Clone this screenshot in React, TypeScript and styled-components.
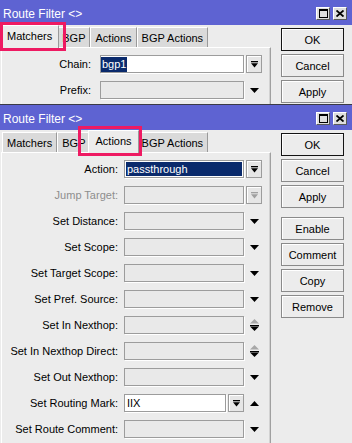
import React from "react";
import styled, { createGlobalStyle, css } from "styled-components";

const Global = createGlobalStyle`
  html, body { margin: 0; padding: 0; background: #ececec; overflow: hidden; }
  body { font-family: "Liberation Sans", Arial, sans-serif; font-size: 11px; color: #000; }
`;

const Page = styled.div`
  width: 352px;
  height: 443px;
  display: flex;
  flex-direction: column;
  overflow: hidden;
`;

const Window = styled.div<{ $h?: number; $sub?: boolean }>`
  position: relative;
  display: flex;
  flex-direction: column;
  background: #ececec;
  overflow: hidden;
  ${(p) => (p.$h ? `height: ${p.$h}px; flex: none;` : `flex: 1; min-height: 0;`)}
  ${(p) => p.$sub && `border-top: 1px solid #3a3a46;`}
`;

const TitleBar = styled.div`
  height: 25px;
  flex: none;
  background: #5e63d2;
  display: flex;
  align-items: center;
  padding: 0 5px 0 3px;
  color: #fff;
  font-size: 12px;
`;

const TitleText = styled.span`
  flex: 1;
  padding-top: 3px;
`;

const Controls = styled.div`
  display: flex;
  gap: 3px;
  padding-top: 1px;
`;

const CtlBtn = styled.div`
  width: 14px;
  height: 13px;
  box-sizing: border-box;
  background: #dedede;
  border: 1px solid;
  border-color: #fff #5a5a5a #5a5a5a #fff;
  display: flex;
  align-items: center;
  justify-content: center;
`;

const Body = styled.div`
  flex: 1;
  min-height: 0;
  display: flex;
  gap: 10px;
  padding: 2px 8px 0 1px;
`;

const Left = styled.div`
  width: 270px;
  flex: none;
  display: flex;
  flex-direction: column;
`;

const TabStrip = styled.div`
  height: 20px;
  flex: none;
  display: flex;
  align-items: flex-end;
  padding-left: 1px;
`;

const Tab = styled.div<{ $active?: boolean }>`
  box-sizing: border-box;
  height: 20px;
  padding: 0 4px;
  display: flex;
  align-items: center;
  justify-content: center;
  white-space: nowrap;
  background: #dadada;
  border-top: 1px solid #fff;
  border-left: 1px solid #fff;
  border-right: 1px solid #9a9a9a;
  ${(p) =>
    p.$active &&
    css`
      background: #ececec;
      height: 23px;
      margin: 0 -2px -1px;
      padding: 0 6px 2px;
      position: relative;
      z-index: 1;
    `}
`;

const Panel = styled.div`
  flex: 1;
  box-sizing: border-box;
  border-top: 1px solid #fff;
  border-left: 1px solid #fff;
  border-right: 1px solid #a0a0a0;
  box-shadow: inset -1px 0 0 #d2d2d2;
  padding-top: 7px;
  display: flex;
  flex-direction: column;
  gap: 8px;
`;

const Row = styled.div`
  height: 18px;
  display: flex;
  align-items: center;
  padding-right: 8px;
`;

const Label = styled.div<{ $w: number; $gap: number; $dim?: boolean }>`
  width: ${(p) => p.$w}px;
  margin-right: ${(p) => p.$gap}px;
  flex: none;
  text-align: right;
  white-space: nowrap;
  color: ${(p) => (p.$dim ? "#8e8e8e" : "#000")};
`;

const FieldGroup = styled.div`
  flex: 1;
  display: flex;
  gap: 2px;
  height: 18px;
`;

const Field = styled.div<{ $kind: "disabled" | "white" | "selected" }>`
  flex: 1;
  height: 18px;
  box-sizing: border-box;
  border: 1px solid #9c9c9c;
  box-shadow: 1px 1px 0 #fff;
  display: flex;
  align-items: center;
  padding-left: 2px;
  white-space: nowrap;
  overflow: hidden;
  background: ${(p) => (p.$kind === "disabled" ? "#e9e9e9" : p.$kind === "white" ? "#fff" : "#0a2a6c")};
  color: ${(p) => (p.$kind === "selected" ? "#fff" : "#000")};
  ${(p) => p.$kind === "selected" && `box-shadow: inset 0 0 0 1px #fff, 1px 1px 0 #fff;`}
`;

const Sel = styled.span`
  background: #0a2a6c;
  color: #fff;
  padding: 1px 1px 2px;
  margin-left: -2px;
`;

const DropBtn = styled.div`
  width: 16px;
  height: 18px;
  flex: none;
  box-sizing: border-box;
  border: 1px solid #9c9c9c;
  background: #e6e6e6;
  box-shadow: inset 1px 1px 0 #fff;
  display: flex;
  align-items: center;
  justify-content: center;
`;

const Slot = styled.div`
  width: 16px;
  height: 18px;
  margin-left: 2px;
  flex: none;
  display: flex;
  align-items: center;
  justify-content: center;
`;

const Side = styled.div`
  width: 63px;
  flex: none;
  display: flex;
  flex-direction: column;
  gap: 3px;
  padding-top: 1px;
`;

const Button = styled.div<{ $default?: boolean; $spaced?: boolean }>`
  height: 23px;
  box-sizing: border-box;
  border: 1px solid ${(p) => (p.$default ? "#141414" : "#8a8a8a")};
  background: #ececec;
  box-shadow: inset 1px 1px 0 #fff;
  display: flex;
  align-items: center;
  justify-content: center;
  ${(p) => p.$spaced && `margin-top: 6px;`}
`;

const Highlight = styled.div<{ $x: number; $y: number; $w: number; $h: number }>`
  position: absolute;
  left: ${(p) => p.$x}px;
  top: ${(p) => p.$y}px;
  width: ${(p) => p.$w}px;
  height: ${(p) => p.$h}px;
  box-sizing: border-box;
  border: 3px solid #ee1a62;
  z-index: 5;
  pointer-events: none;
`;

/* ---------- icons ---------- */
const MaxIcon = () => (
  <svg width="9" height="9" viewBox="0 0 9 9" shapeRendering="crispEdges">
    <rect x="0.5" y="0.5" width="8" height="8" fill="none" stroke="#000" />
    <rect x="0" y="0" width="9" height="2" fill="#000" />
  </svg>
);
const CloseIcon = () => (
  <svg width="8" height="7" viewBox="0 0 8 7">
    <path d="M0.5 0.5 L7.5 6.5 M7.5 0.5 L0.5 6.5" stroke="#000" strokeWidth="1.8" />
  </svg>
);
const BarDown = ({ color = "#000" }: { color?: string }) => (
  <svg width="7" height="7" viewBox="0 0 7 7">
    <rect x="0" y="0" width="7" height="1.3" fill={color} />
    <polygon points="0,2.3 7,2.3 3.5,6.6" fill={color} />
  </svg>
);
const Down = () => (
  <svg width="9" height="5" viewBox="0 0 9 5">
    <polygon points="0,0 9,0 4.5,5" fill="#000" />
  </svg>
);
const Up = () => (
  <svg width="9" height="5" viewBox="0 0 9 5">
    <polygon points="0,5 9,5 4.5,0" fill="#000" />
  </svg>
);
const UpDown = () => (
  <svg width="9" height="12" viewBox="0 0 9 12">
    <polygon points="0,4.5 9,4.5 4.5,0" fill="#a8a8a8" />
    <rect x="0" y="6" width="9" height="1.2" fill="#000" />
    <polygon points="0,7.6 9,7.6 4.5,12" fill="#000" />
  </svg>
);

type Ctl = "bar" | "barDim" | "down" | "up" | "updown";
type RowDef = {
  label: string;
  dim?: boolean;
  kind: "disabled" | "white" | "selected";
  value?: React.ReactNode;
  ctl: Ctl;
  inlineBtn?: boolean;
};

const renderCtl = (c: Ctl) => {
  switch (c) {
    case "bar":
      return (
        <DropBtn>
          <BarDown />
        </DropBtn>
      );
    case "barDim":
      return (
        <DropBtn>
          <BarDown color="#a0a0a0" />
        </DropBtn>
      );
    case "down":
      return <Down />;
    case "up":
      return <Up />;
    case "updown":
      return <UpDown />;
  }
};

const FormRow = ({ r, w, gap }: { r: RowDef; w: number; gap: number }) => (
  <Row>
    <Label $w={w} $gap={gap} $dim={r.dim}>
      {r.label}
    </Label>
    <FieldGroup>
      <Field $kind={r.kind}>{r.value}</Field>
      {r.inlineBtn && (
        <DropBtn>
          <BarDown />
        </DropBtn>
      )}
    </FieldGroup>
    <Slot>{renderCtl(r.ctl)}</Slot>
  </Row>
);

const TABS = ["Matchers", "BGP", "Actions", "BGP Actions"];

const WindowControls = () => (
  <Controls>
    <CtlBtn>
      <MaxIcon />
    </CtlBtn>
    <CtlBtn>
      <CloseIcon />
    </CtlBtn>
  </Controls>
);

const matcherRows: RowDef[] = [
  { label: "Chain:", kind: "white", value: <Sel>bgp1</Sel>, ctl: "bar" },
  { label: "Prefix:", kind: "disabled", ctl: "down" },
];

const actionRows: RowDef[] = [
  { label: "Action:", kind: "selected", value: "passthrough", ctl: "bar" },
  { label: "Jump Target:", dim: true, kind: "disabled", ctl: "barDim" },
  { label: "Set Distance:", kind: "disabled", ctl: "down" },
  { label: "Set Scope:", kind: "disabled", ctl: "down" },
  { label: "Set Target Scope:", kind: "disabled", ctl: "down" },
  { label: "Set Pref. Source:", kind: "disabled", ctl: "down" },
  { label: "Set In Nexthop:", kind: "disabled", ctl: "updown" },
  { label: "Set In Nexthop Direct:", kind: "disabled", ctl: "updown" },
  { label: "Set Out Nexthop:", kind: "disabled", ctl: "down" },
  { label: "Set Routing Mark:", kind: "white", value: "IIX", ctl: "up", inlineBtn: true },
  { label: "Set Route Comment:", kind: "disabled", ctl: "down" },
];

export default function App() {
  return (
    <Page>
      <Global />
      <Window $h={104}>
        <TitleBar>
          <TitleText>Route Filter &lt;&gt;</TitleText>
          <WindowControls />
        </TitleBar>
        <Body>
          <Left>
            <TabStrip>
              {TABS.map((t) => (
                <Tab key={t} $active={t === "Matchers"}>
                  {t}
                </Tab>
              ))}
            </TabStrip>
            <Panel>
              {matcherRows.map((r) => (
                <FormRow key={r.label} r={r} w={89} gap={9} />
              ))}
            </Panel>
          </Left>
          <Side>
            <Button $default>OK</Button>
            <Button>Cancel</Button>
            <Button>Apply</Button>
          </Side>
        </Body>
        <Highlight $x={0} $y={22} $w={66} $h={29} />
      </Window>
      <Window $sub>
        <TitleBar>
          <TitleText>Route Filter &lt;&gt;</TitleText>
          <WindowControls />
        </TitleBar>
        <Body>
          <Left>
            <TabStrip>
              {TABS.map((t) => (
                <Tab key={t} $active={t === "Actions"}>
                  {t}
                </Tab>
              ))}
            </TabStrip>
            <Panel>
              {actionRows.map((r) => (
                <FormRow key={r.label} r={r} w={116} gap={6} />
              ))}
            </Panel>
          </Left>
          <Side>
            <Button $default>OK</Button>
            <Button>Cancel</Button>
            <Button>Apply</Button>
            <Button $spaced>Enable</Button>
            <Button>Comment</Button>
            <Button>Copy</Button>
            <Button>Remove</Button>
          </Side>
        </Body>
        <Highlight $x={78} $y={21} $w={64} $h={30} />
      </Window>
    </Page>
  );
}
